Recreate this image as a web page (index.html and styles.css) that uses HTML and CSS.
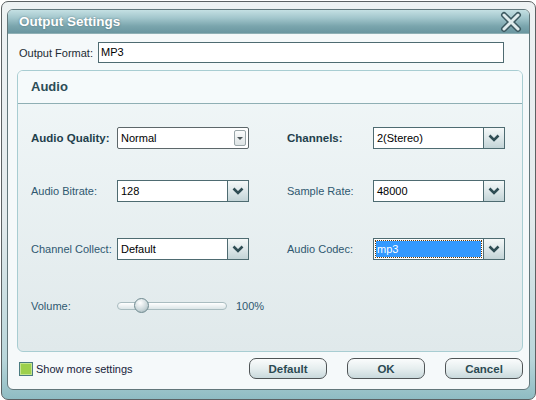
FILE: index.html
```html
<!DOCTYPE html>
<html>
<head>
  <title>Output Settings</title>
  <link rel="stylesheet" href="styles.css">
</head>
<body>

  <div class="window">
    <div class="panel">
      <div class="titlebar">
        <span class="title">Output Settings</span>
        <svg class="close" width="24" height="22" viewBox="0 0 24 22">
          <path d="M5 4 L19 18 M19 4 L5 18" stroke="#3d5b62" stroke-width="6" stroke-linecap="round" fill="none"/>
          <path d="M5 4 L19 18 M19 4 L5 18" stroke="#dfeced" stroke-width="3" stroke-linecap="round" fill="none"/>
        </svg>
      </div>

      <div class="format-row">
        <label class="format-label">Output Format:</label>
        <div class="textbox">MP3</div>
      </div>

      <div class="group">
        <div class="group-head">Audio</div>
        <div class="group-body">

          <div class="row row-1">
            <span class="label strong">Audio Quality:</span>
            <div class="combo classic">
              <span class="value">Normal</span>
              <span class="mini-btn"><span class="tri"></span></span>
            </div>
            <span class="label strong">Channels:</span>
            <div class="combo">
              <span class="value">2(Stereo)</span>
              <span class="drop"><svg width="12" height="8" viewBox="0 0 12 8"><path d="M1.5 1.5 L6 6 L10.5 1.5" stroke="#2f4d54" stroke-width="2.6" fill="none"/></svg></span>
            </div>
          </div>

          <div class="row row-2">
            <span class="label">Audio Bitrate:</span>
            <div class="combo">
              <span class="value">128</span>
              <span class="drop"><svg width="12" height="8" viewBox="0 0 12 8"><path d="M1.5 1.5 L6 6 L10.5 1.5" stroke="#2f4d54" stroke-width="2.6" fill="none"/></svg></span>
            </div>
            <span class="label">Sample Rate:</span>
            <div class="combo">
              <span class="value">48000</span>
              <span class="drop"><svg width="12" height="8" viewBox="0 0 12 8"><path d="M1.5 1.5 L6 6 L10.5 1.5" stroke="#2f4d54" stroke-width="2.6" fill="none"/></svg></span>
            </div>
          </div>

          <div class="row row-3">
            <span class="label">Channel Collect:</span>
            <div class="combo">
              <span class="value">Default</span>
              <span class="drop"><svg width="12" height="8" viewBox="0 0 12 8"><path d="M1.5 1.5 L6 6 L10.5 1.5" stroke="#2f4d54" stroke-width="2.6" fill="none"/></svg></span>
            </div>
            <span class="label">Audio Codec:</span>
            <div class="combo">
              <span class="value selected">mp3</span>
              <span class="drop"><svg width="12" height="8" viewBox="0 0 12 8"><path d="M1.5 1.5 L6 6 L10.5 1.5" stroke="#2f4d54" stroke-width="2.6" fill="none"/></svg></span>
            </div>
          </div>

          <div class="row row-4">
            <span class="label">Volume:</span>
            <div class="volume">
              <div class="track">
                <span class="thumb"></span>
              </div>
              <span class="percent">100%</span>
            </div>
          </div>

        </div>
      </div>

      <div class="footer">
        <span class="check"></span>
        <span class="check-text">Show more settings</span>
        <div class="buttons">
          <button class="btn">Default</button>
          <button class="btn">OK</button>
          <button class="btn">Cancel</button>
        </div>
      </div>
    </div>
  </div>

</body>
</html>
```

FILE: styles.css
```css
body {
  margin: 0;
  padding: 1px 0 0 1px;
  background: #ffffff;
  font-family: "Liberation Sans", Arial, sans-serif;
  font-size: 11px;
}

.window {
  box-sizing: border-box;
  width: 535px;
  height: 399px;
  border: 1px solid #5c6163;
  border-radius: 7px;
  padding: 7px 5px 9px 5px;
  background: linear-gradient(#eef2f3 0%, #e2eaec 55%, #b9d6da 90%, #8fbcc3 100%);
  display: flex;
  flex-direction: column;
}

.panel {
  flex: 1;
  display: flex;
  flex-direction: column;
  border: 1px solid #62777b;
  border-radius: 6px;
  background: #f5f9fa;
  overflow: hidden;
}

.titlebar {
  height: 23px;
  display: flex;
  align-items: center;
  padding: 0 6px 0 11px;
  background: linear-gradient(#c4e0e3 0%, #a2c6cc 35%, #7aa5ad 70%, #6a96a0 100%);
  border-bottom: 1px solid #8fb0b5;
}

.title {
  flex: 1;
  color: #ffffff;
  font-weight: bold;
  font-size: 13.5px;
  text-shadow: 0 0 2px rgba(40, 70, 80, 0.6);
}

.format-row {
  display: flex;
  align-items: center;
  margin-top: 8px;
  padding-left: 11px;
}

.format-label {
  width: 79px;
  color: #1c2b33;
}

.textbox {
  box-sizing: border-box;
  width: 406px;
  height: 21px;
  border: 1px solid #4e6b71;
  background: #ffffff;
  padding: 3px 2px;
  color: #000000;
}

.group {
  height: 280px;
  margin: 7px 6px 0 9px;
  border: 1px solid #a8cdd2;
  border-radius: 6px;
  background: linear-gradient(#f1f7f8, #e0e9eb);
  overflow: hidden;
}

.group-head {
  height: 32px;
  line-height: 32px;
  padding-left: 13px;
  background: #f5fafb;
  border-bottom: 1px solid #8fafb4;
  color: #2c4c56;
  font-weight: bold;
  font-size: 13px;
}

.group-body {
  padding: 23px 0 0 13px;
}

.row {
  display: grid;
  grid-template-columns: 86px 132px 38px 86px 132px;
  align-items: center;
  height: 22px;
}

.row .label:nth-of-type(2) {
  grid-column: 4;
}

.row-2 { margin-top: 31px; }
.row-3 { margin-top: 36px; }
.row-4 { margin-top: 35px; }

.label {
  color: #2f5870;
}

.label.strong {
  color: #1f3f4c;
  font-weight: bold;
  font-size: 11.5px;
}

.combo {
  box-sizing: border-box;
  height: 22px;
  display: flex;
  border: 1px solid #4e6b71;
  background: #ffffff;
}

.combo .value {
  flex: 1;
  display: flex;
  align-items: center;
  padding-left: 3px;
  color: #000000;
}

.combo .value.selected {
  margin: 2px;
  padding-left: 1px;
  background: #3399ff;
  color: #ffffff;
  outline: 1px dotted #6b3a00;
}

.drop {
  width: 20px;
  display: flex;
  align-items: center;
  justify-content: center;
  border-left: 1px solid #4e6b71;
  background: linear-gradient(#f4f8f8, #dde7e9 50%, #c3d4d7);
}

.combo.classic {
  border-color: #5d676a;
  border-radius: 2px;
}

.mini-btn {
  width: 10px;
  margin: 2px 2px 2px 0;
  display: flex;
  align-items: center;
  justify-content: center;
  border: 1px solid #9aa6a9;
  border-radius: 2px;
  background: linear-gradient(#fbfcfc, #dde3e4);
}

.tri {
  width: 0;
  height: 0;
  border-left: 3px solid transparent;
  border-right: 3px solid transparent;
  border-top: 3px solid #4a5558;
}

.volume {
  grid-column: 2 / span 2;
  display: flex;
  align-items: center;
}

.track {
  position: relative;
  box-sizing: border-box;
  width: 110px;
  height: 8px;
  border: 1px solid #a9bcc0;
  border-radius: 4px;
  background: linear-gradient(#ffffff, #dbe5e7);
}

.thumb {
  position: absolute;
  left: 16px;
  top: -5px;
  box-sizing: border-box;
  width: 15px;
  height: 15px;
  border: 1px solid #6f8a90;
  border-radius: 50%;
  background: radial-gradient(circle at 40% 30%, #ffffff, #c9d6d9 60%, #93a9ae);
}

.percent {
  margin-left: 9px;
  color: #2f5870;
}

.footer {
  display: flex;
  align-items: center;
  margin-top: auto;
  padding: 0 6px 10px 11px;
}

.check {
  box-sizing: border-box;
  width: 14px;
  height: 14px;
  border: 1px solid #4b7b80;
  background: #9dd04c;
  box-shadow: inset 0 0 0 1px #c5e58f;
}

.check-text {
  margin-left: 3px;
  color: #17233a;
}

.buttons {
  margin-left: auto;
  display: flex;
  gap: 20px;
}

.btn {
  box-sizing: border-box;
  width: 78px;
  height: 21px;
  padding: 0;
  border: 1px solid #4f5456;
  border-radius: 7px;
  background: linear-gradient(#fafcfc, #e6eeef 50%, #c9d9dc);
  color: #2b4a53;
  font-family: "Liberation Sans", Arial, sans-serif;
  font-weight: bold;
  font-size: 11.5px;
}
```
